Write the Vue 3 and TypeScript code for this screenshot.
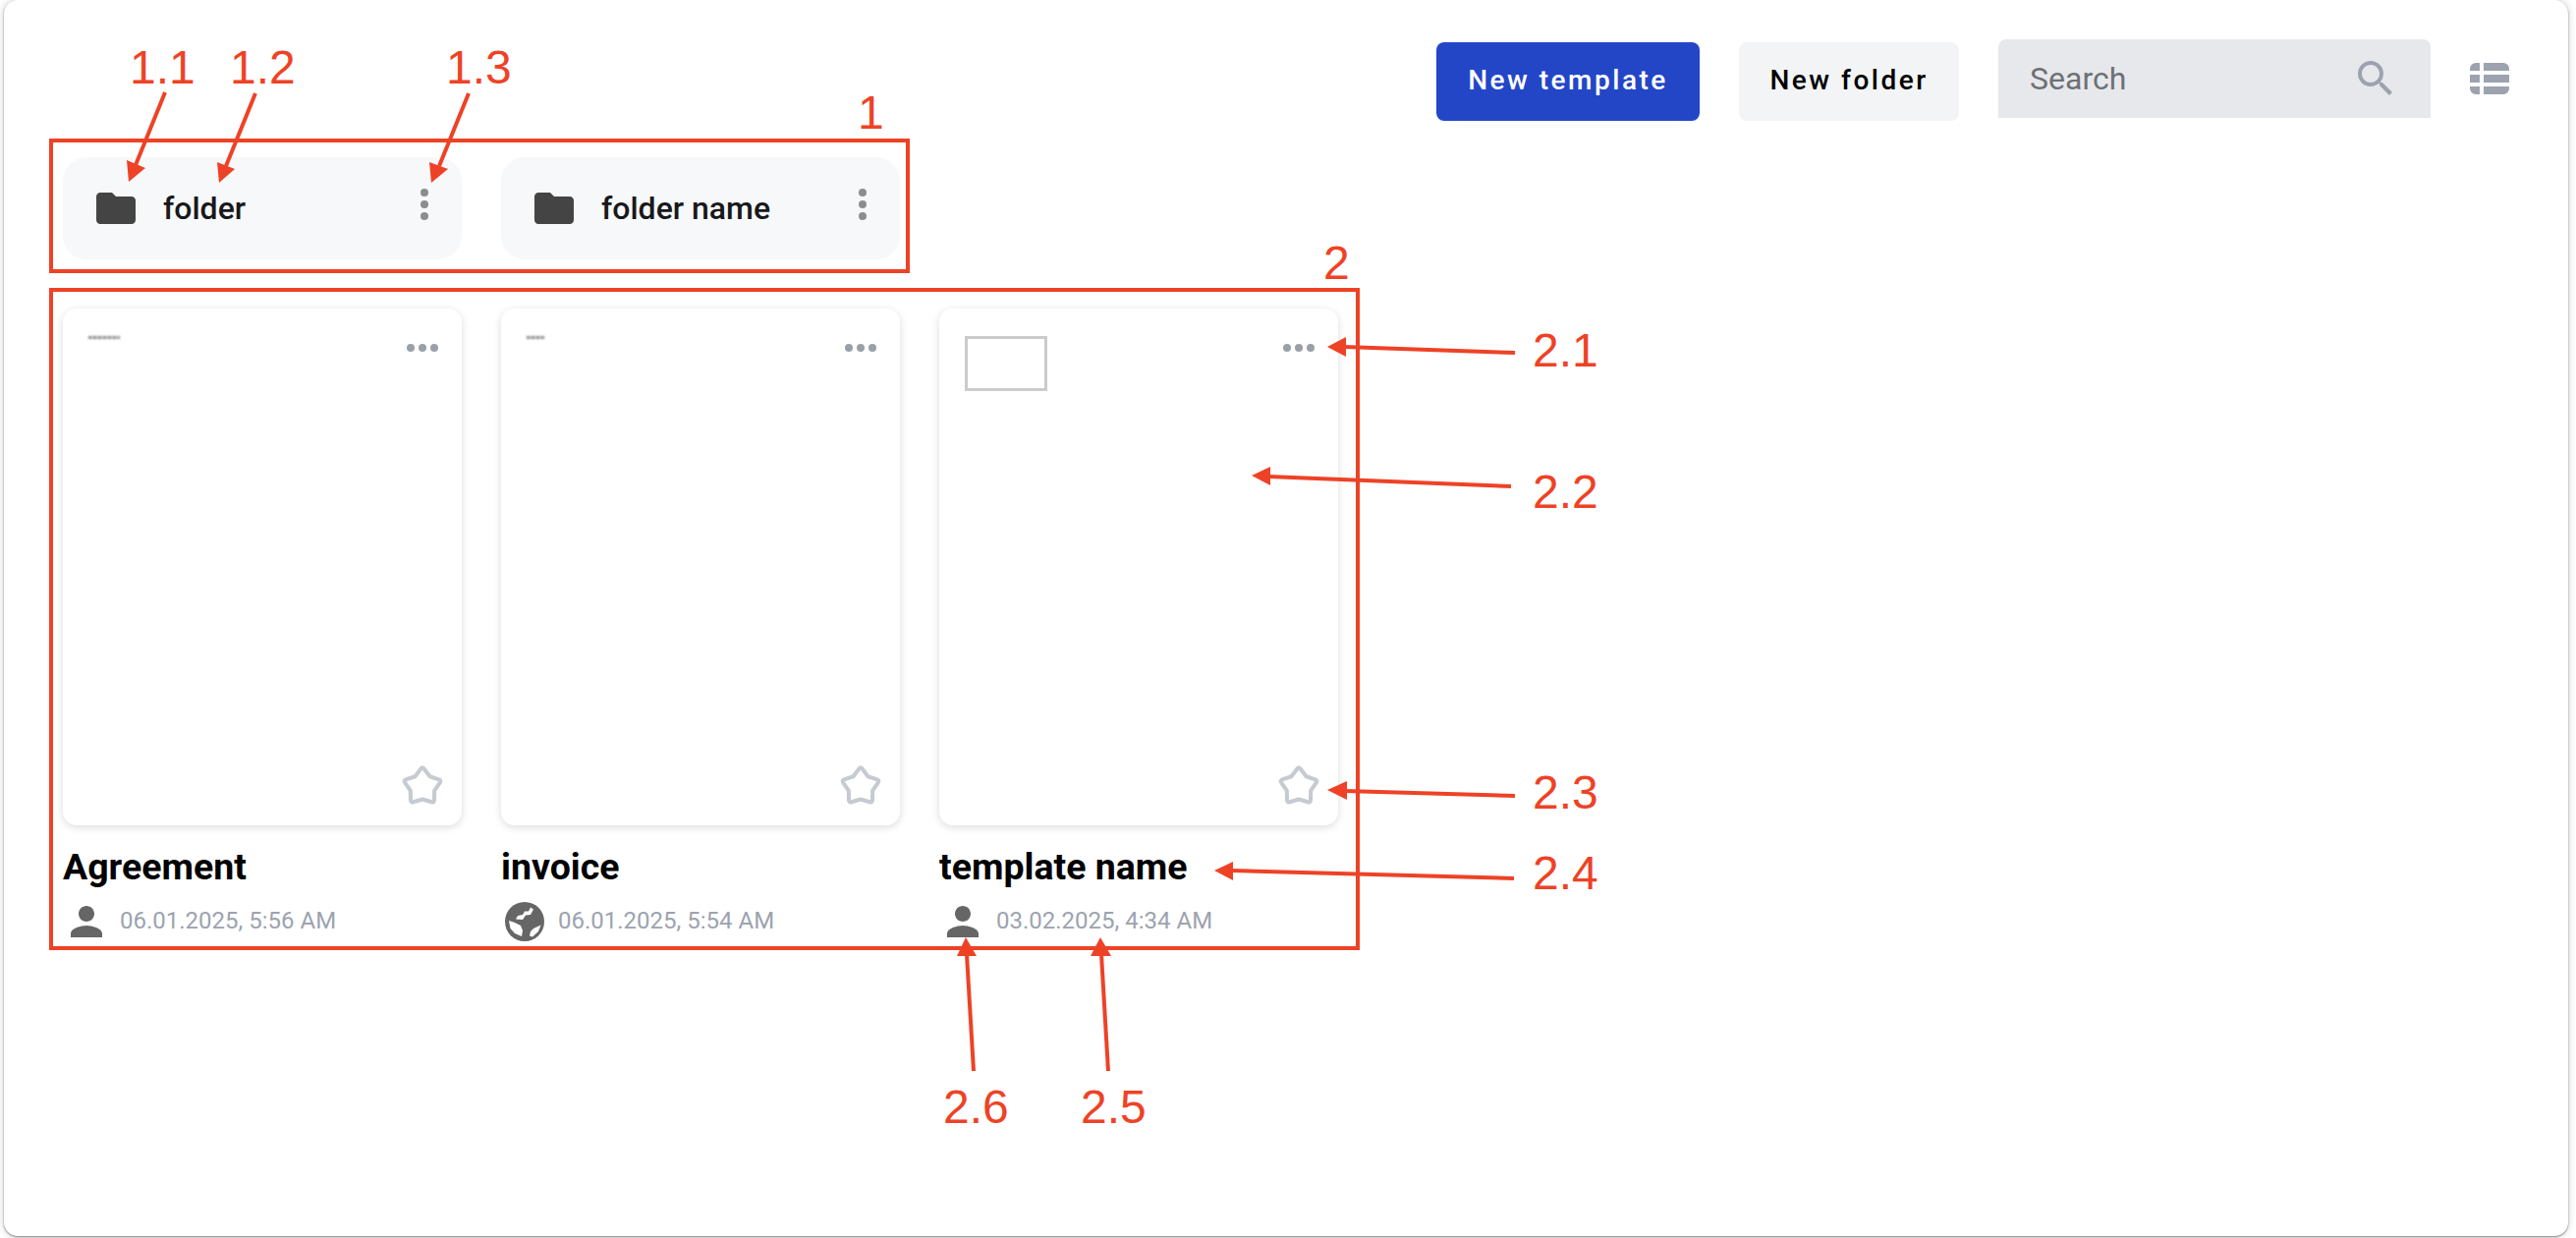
<script setup lang="ts">
interface Folder {
  name: string
}

interface Template {
  name: string
  date: string
  shared: boolean
  thumb: 'line' | 'short' | 'box'
}

const folders: Folder[] = [{ name: 'folder' }, { name: 'folder name' }]

const templates: Template[] = [
  { name: 'Agreement', date: '06.01.2025, 5:56 AM', shared: false, thumb: 'line' },
  { name: 'invoice', date: '06.01.2025, 5:54 AM', shared: true, thumb: 'short' },
  { name: 'template name', date: '03.02.2025, 4:34 AM', shared: false, thumb: 'box' },
]

// review marks drawn over the screen
const frames = [
  { x: 52, y: 143, w: 872, h: 133 },
  { x: 52, y: 295, w: 1330, h: 670 },
]

const labels = [
  { text: '1.1', x: 132, y: 85 },
  { text: '1.2', x: 234, y: 85 },
  { text: '1.3', x: 454, y: 85 },
  { text: '1', x: 873, y: 131 },
  { text: '2', x: 1347, y: 284 },
  { text: '2.1', x: 1560, y: 373 },
  { text: '2.2', x: 1560, y: 517 },
  { text: '2.3', x: 1560, y: 823 },
  { text: '2.4', x: 1560, y: 905 },
  { text: '2.6', x: 960, y: 1143 },
  { text: '2.5', x: 1100, y: 1143 },
]

const arrows = [
  { x1: 168, y1: 94, x2: 138, y2: 168, head: '131,185 129,163 148,171' },
  { x1: 260, y1: 95, x2: 230, y2: 169, head: '223,186 221,165 239,172' },
  { x1: 477, y1: 95, x2: 447, y2: 169, head: '439,186 437,165 456,172' },
  { x1: 1542, y1: 359, x2: 1368, y2: 353, head: '1351,353 1370,343 1370,363' },
  { x1: 1538, y1: 495, x2: 1291, y2: 485, head: '1274,484 1293,475 1293,494' },
  { x1: 1542, y1: 810, x2: 1369, y2: 805, head: '1351,804 1371,795 1371,814' },
  { x1: 1541, y1: 894, x2: 1253, y2: 886, head: '1236,886 1255,877 1255,896' },
  { x1: 991, y1: 1090, x2: 984, y2: 971, head: '983,954 974,973 994,973' },
  { x1: 1128, y1: 1090, x2: 1121, y2: 971, head: '1120,954 1110,973 1131,973' },
]
</script>

<template>
  <div class="page">
    <main class="panel">
      <div class="toolbar">
        <button class="btn btn-primary">New template</button>
        <button class="btn btn-light">New folder</button>
        <label class="search">
          <input class="search-input" placeholder="Search" />
          <svg class="icon" viewBox="0 0 24 24" fill="#9ca3af">
            <path d="M15.5 14h-.79l-.28-.27A6.47 6.47 0 0 0 16 9.5 6.5 6.5 0 1 0 9.5 16c1.61 0 3.09-.59 4.23-1.57l.27.28v.79l5 4.99L20.49 19l-4.99-5zm-6 0C7.01 14 5 11.99 5 9.5S7.01 5 9.5 5 14 7.01 14 9.5 11.99 14 9.5 14z" />
          </svg>
        </label>
        <svg class="view-toggle" viewBox="0 0 40 32" fill="#9ca3af">
          <path d="M0 8V6a6 6 0 0 1 6-6h4v8zM14 0h20a6 6 0 0 1 6 6v2H14zM0 12h10v8H0zM14 12h26v8H14zM0 24h10v8H6a6 6 0 0 1-6-6zM14 24h26v2a6 6 0 0 1-6 6H14z" />
        </svg>
      </div>

      <section class="folders">
        <div v-for="folder in folders" :key="folder.name" class="folder">
          <svg class="icon" viewBox="0 0 24 24" fill="#444">
            <path d="M10 4H4c-1.1 0-1.99.9-1.99 2L2 18c0 1.1.9 2 2 2h16c1.1 0 2-.9 2-2V8c0-1.1-.9-2-2-2h-8l-2-2z" />
          </svg>
          <span class="folder-name">{{ folder.name }}</span>
          <svg class="icon folder-menu" viewBox="0 0 24 24" fill="#8b8d91">
            <circle cx="12" cy="6" r="2" />
            <circle cx="12" cy="12" r="2" />
            <circle cx="12" cy="18" r="2" />
          </svg>
        </div>
      </section>

      <section class="templates">
        <article v-for="item in templates" :key="item.name" class="template">
          <div class="card">
            <div class="card-top">
              <div :class="['thumb', 'thumb-' + item.thumb]"></div>
              <svg class="icon" viewBox="0 0 24 24" fill="#9aa0a8">
                <circle cx="6" cy="12" r="2" />
                <circle cx="12" cy="12" r="2" />
                <circle cx="18" cy="12" r="2" />
              </svg>
            </div>
            <svg class="icon star" viewBox="0 0 48 48" fill="none" stroke="#c6cad1" stroke-width="3.8" stroke-linejoin="round">
              <path
                transform="translate(24 23) scale(1.07) translate(-24 -23.5)"
                d="M22.45 8.05Q24 6 25.55 8.05L31.05 15.3L39.65 18.29Q42.07 19.13 40.6 21.24L35.4 28.7L35.22 37.8Q35.17 40.37 32.71 39.63L24 37L15.29 39.63Q12.83 40.37 12.78 37.8L12.6 28.7L7.4 21.24Q5.93 19.13 8.35 18.29L16.95 15.3Z"
              />
            </svg>
          </div>
          <h3 class="template-name">{{ item.name }}</h3>
          <div class="meta">
            <svg v-if="item.shared" class="icon" viewBox="0 0 48 48">
              <circle cx="24" cy="24" r="20" fill="#666" />
              <g transform="translate(4 4)" fill="#fff">
                <polygon points="26,5.5 29,7.5 26,13 21,13.5 18,18 11,17.5 13,14 18,13 20,9.5 24,9.5" />
                <polygon points="4,19 10,21 16,24 18,29 17,35 10,32 5.5,27" />
                <polygon points="29,27 36.5,23.5 34,30 28,35.5 25,34.5 26,30" />
              </g>
            </svg>
            <svg v-else class="icon" viewBox="0 0 24 24" fill="#666">
              <path d="M12 12c2.21 0 4-1.79 4-4s-1.79-4-4-4-4 1.79-4 4 1.79 4 4 4zm0 2c-2.67 0-8 1.34-8 4v2h16v-2c0-2.66-5.33-4-8-4z" />
            </svg>
            <span class="date">{{ item.date }}</span>
          </div>
        </article>
      </section>
    </main>

    <svg class="marks" viewBox="0 0 2622 1260">
      <rect
        v-for="(f, i) in frames"
        :key="'f' + i"
        :x="f.x"
        :y="f.y"
        :width="f.w"
        :height="f.h"
        fill="none"
        stroke="#ee4226"
        stroke-width="4"
      />
      <g v-for="(a, i) in arrows" :key="'a' + i">
        <line :x1="a.x1" :y1="a.y1" :x2="a.x2" :y2="a.y2" stroke="#ee4226" stroke-width="4" />
        <polygon :points="a.head" fill="#ee4226" />
      </g>
      <text v-for="l in labels" :key="l.text" class="mark-label" :x="l.x" :y="l.y">{{ l.text }}</text>
    </svg>
  </div>
</template>

<style>
html,
body {
  margin: 0;
  background: #fff;
}
</style>

<style scoped>
.page {
  position: relative;
  width: 2622px;
  height: 1260px;
  box-sizing: border-box;
  padding: 0 8px 2px 4px;
  overflow: hidden;
  font-family: Roboto, "Liberation Sans", sans-serif;
}

.panel {
  height: 100%;
  box-sizing: border-box;
  padding: 40px 60px 0;
  background: #fff;
  border-radius: 14px;
  box-shadow: 0 1px 2px rgba(0, 0, 0, 0.45), 0 0 8px rgba(0, 0, 0, 0.18);
}

.icon {
  flex: none;
  display: block;
  width: 48px;
  height: 48px;
}

.toolbar {
  display: flex;
  justify-content: flex-end;
  align-items: flex-start;
  gap: 40px;
  height: 83px;
}

.btn {
  height: 80px;
  margin-top: 3px;
  padding: 0 0 3px;
  border: 0;
  border-radius: 8px;
  font-family: inherit;
  font-size: 28px;
  font-weight: 500;
  letter-spacing: 2.5px;
}

.btn-primary {
  width: 268px;
  background: #2346c7;
  color: #fff;
}

.btn-light {
  width: 224px;
  background: #f3f4f6;
  color: #000;
}

.search {
  width: 440px;
  height: 80px;
  box-sizing: border-box;
  display: flex;
  align-items: center;
  padding: 0 32px;
  background: #e7e8ec;
  border-radius: 8px 8px 0 0;
}

.search-input {
  flex: 1;
  min-width: 0;
  padding: 0;
  border: 0;
  outline: 0;
  background: transparent;
  font-family: inherit;
  font-size: 32px;
  color: #374151;
}

.search-input::placeholder {
  color: #6e7075;
  opacity: 1;
}

.view-toggle {
  flex: none;
  width: 40px;
  height: 32px;
  margin-top: 24px;
}

.folders {
  display: flex;
  gap: 40px;
  margin-top: 37px;
}

.folder {
  width: 406px;
  height: 104px;
  box-sizing: border-box;
  display: flex;
  align-items: center;
  padding: 0 14px 0 30px;
  background: #f7f8fa;
  border-radius: 24px;
}

.folder-name {
  flex: 1;
  margin-left: 24px;
  font-size: 32px;
  font-weight: 500;
  color: #18181b;
}

.folder-menu {
  margin-bottom: 8px;
}

.templates {
  display: flex;
  gap: 40px;
  margin-top: 50px;
}

.template {
  width: 406px;
}

.card {
  height: 526px;
  box-sizing: border-box;
  display: flex;
  flex-direction: column;
  justify-content: space-between;
  padding: 16px;
  background: #fff;
  border-radius: 14px;
  box-shadow: 0 2px 8px rgba(0, 0, 0, 0.14);
}

.card-top {
  display: flex;
  justify-content: space-between;
  align-items: flex-start;
}

.thumb {
  margin: 12px 0 0 10px;
}

.thumb-line,
.thumb-short {
  height: 3px;
  background: repeating-linear-gradient(90deg, #8a8a8a 0 3px, #c4c4c4 3px 5px);
  filter: blur(0.9px);
}

.thumb-line {
  width: 32px;
}

.thumb-short {
  width: 18px;
}

.thumb-box {
  width: 84px;
  height: 56px;
  box-sizing: border-box;
  border: 3px solid #cbcbcb;
  filter: blur(0.5px);
}

.star {
  align-self: flex-end;
}

.template-name {
  margin: 18px 0 0;
  font-size: 37.5px;
  line-height: 48px;
  font-weight: 700;
  color: #000;
}

.meta {
  display: flex;
  align-items: center;
  gap: 10px;
  margin-top: 8px;
}

.date {
  margin-bottom: 3px;
  font-size: 24px;
  color: #9ca3af;
}

.marks {
  position: absolute;
  left: 0;
  top: 0;
  width: 2622px;
  height: 1260px;
  pointer-events: none;
}

.mark-label {
  font-family: "Liberation Sans", Arial, sans-serif;
  font-size: 48px;
  fill: #ee4226;
}
</style>
